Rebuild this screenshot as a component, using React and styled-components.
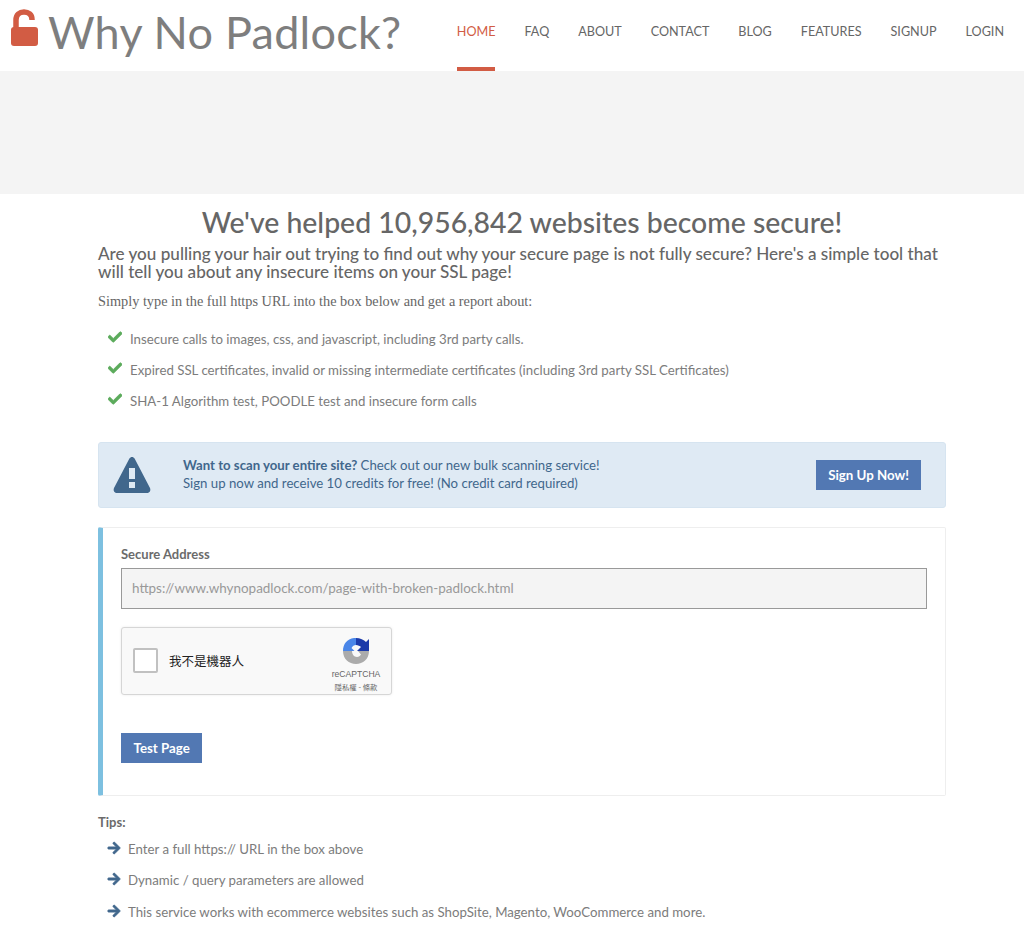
import React from 'react'
import styled, { createGlobalStyle } from 'styled-components'
import { FaCheck, FaArrowRight } from 'react-icons/fa'

const GlobalStyle = createGlobalStyle`
  html, body {
    margin: 0;
    padding: 0;
    background: #fff;
    font-family: 'Lato', sans-serif;
    color: #777;
  }
  * { box-sizing: border-box; }
`

const Header = styled.header`
  height: 71px;
  display: flex;
  justify-content: space-between;
  padding: 0 20px 0 10px;
`

const Brand = styled.div`
  display: flex;
  align-items: flex-start;
  gap: 8px;
  padding-top: 9px;
`

const BrandName = styled.span`
  font-size: 45px;
  line-height: 46px;
  color: #7e7e7e;
  letter-spacing: 0.25px;
`

const Nav = styled.nav`
  display: flex;
  gap: 29px;
`

const NavLink = styled.a`
  height: 71px;
  padding-top: 24px;
  font-size: 12.6px;
  line-height: 16px;
  color: ${(props) => (props.$active ? '#d25c44' : '#666')};
  border-bottom: 4px solid ${(props) => (props.$active ? '#d25c44' : 'transparent')};
`

const Band = styled.div`
  height: 123px;
  background: #f4f4f4;
`

const Main = styled.main`
  width: 848px;
  margin-left: 98px;
`

const Title = styled.h1`
  margin: 11px 0 0;
  font-size: 28.4px;
  line-height: 34px;
  font-weight: 500;
  color: #666;
  text-align: center;
`

const Lead = styled.h2`
  margin: 6px 0 0;
  font-size: 17.1px;
  line-height: 18px;
  font-weight: 500;
  color: #666;
`

const Intro = styled.p`
  margin: 10px 0 0;
  font-family: 'Liberation Serif', serif;
  font-size: 14.3px;
  line-height: 20px;
  color: #666;
`

const List = styled.ul`
  list-style: none;
  margin: ${(props) => props.$margin};
  padding: 0 0 0 ${(props) => props.$indent};
`

const Item = styled.li`
  display: flex;
  align-items: center;
  gap: ${(props) => props.$gap};
  height: ${(props) => props.$height};
  font-size: 13.25px;
  color: #7c7c7c;
`

const CheckIcon = styled(FaCheck)`
  color: #5cab5c;
  font-size: 14px;
  margin-top: -4px;
  stroke: currentColor;
  stroke-width: 30px;
`

const ArrowIcon = styled(FaArrowRight)`
  color: #41678c;
  font-size: 14px;
  margin-top: -2px;
  stroke: currentColor;
  stroke-width: 30px;
`

const Alert = styled.div`
  height: 66px;
  margin-top: 25px;
  display: flex;
  align-items: center;
  padding: 0 24px 0 14px;
  background: #dfeaf4;
  border: 1px solid #d6e4f0;
  border-radius: 3px;
  color: #41678c;
  font-size: 13.2px;
  line-height: 18px;
`

const AlertIconBox = styled.svg`
  flex: none;
  width: 38px;
  height: 36px;
`

const AlertText = styled.div`
  flex: 1;
  margin-left: 32px;
  padding-bottom: 2px;
  b { font-weight: 700; }
`

const Button = styled.button`
  height: 30px;
  margin-top: ${(props) => props.$offset || '0'};
  padding: 0 ${(props) => props.$pad};
  border: none;
  background: #5278b3;
  color: #fff;
  font-family: inherit;
  font-size: 13.3px;
  font-weight: 700;
`

const Card = styled.form`
  height: 269px;
  margin-top: 19px;
  padding: 18px 18px 0 18px;
  background: #fff;
  border: 1px solid #eee;
  border-left: 5px solid #7dc0e0;
  border-radius: 2px;
`

const Label = styled.label`
  display: block;
  font-size: 13px;
  line-height: 16px;
  font-weight: 700;
  color: #6b6b6b;
`

const Input = styled.input`
  display: block;
  width: 100%;
  height: 41px;
  margin-top: 6px;
  padding: 0 10px;
  background: #f4f4f4;
  border: 1px solid #999;
  font-family: inherit;
  font-size: 13.45px;
  &::placeholder { color: #999; opacity: 1; }
`

const Captcha = styled.div`
  position: relative;
  width: 271px;
  height: 68px;
  margin: 18px 0 38px;
  background: #f9f9f9;
  border: 1px solid #d6d6d6;
  border-radius: 3px;
  box-shadow: 0 0 3px rgba(0, 0, 0, 0.08);
  display: flex;
  align-items: center;
  padding-left: 11px;
`

const CaptchaBox = styled.span`
  width: 25px;
  height: 25px;
  background: #fff;
  border: 2px solid #c1c1c1;
  border-radius: 2px;
`

const CaptchaText = styled.span`
  margin-left: 11px;
  font-family: 'Noto Sans CJK TC', sans-serif;
  font-size: 12.5px;
  color: #222;
`

const CaptchaBrand = styled.div`
  position: absolute;
  right: 10px;
  top: 8px;
  width: 50px;
  display: flex;
  flex-direction: column;
  align-items: center;
  font-family: 'Liberation Sans', sans-serif;
  font-size: 8.6px;
  line-height: 10px;
  color: #666;
  svg { margin-bottom: 3px; }
`

const CaptchaLinks = styled.span`
  margin-top: 1px;
  font-family: 'Noto Sans CJK TC', sans-serif;
  font-size: 7.4px;
  line-height: 13px;
  white-space: nowrap;
`

const TipsLabel = styled.div`
  margin-top: 18px;
  font-size: 13px;
  line-height: 16px;
  font-weight: 700;
  color: #6b6b6b;
`

const PadlockIcon = () => (
  <svg width="30" height="38" viewBox="0 0 30 38">
    <rect x="1" y="18" width="27" height="19" rx="3" fill="#d25c44" />
    <path d="M6 19 V11 C6 5.5 9.5 3 14 3 C18.5 3 22 5.5 22 10.5 V11" fill="none" stroke="#d25c44" strokeWidth="5.5" />
  </svg>
)

const WarningIcon = () => (
  <AlertIconBox viewBox="0 0 38 36">
    <path
      fillRule="evenodd"
      d="M19 0 C20 0 21 .6 21.6 1.6 L37 31 C38 33.4 36.8 36 34 36 H4 C1.2 36 0 33.4 1 31 L16.4 1.6 C17 .6 18 0 19 0 Z M16 11 V22 H22 V11 Z M16 25 V31 H22 V25 Z"
      fill="#41678c"
    />
  </AlertIconBox>
)

const RecaptchaLogo = () => (
  <svg width="30" height="30" viewBox="0 0 30 30">
    <path d="M2 15 C2 8 6 3 13 2 L15 2 L15 9 C13 9 11.5 10 10.5 12 L13.5 15 Z" fill="#4a86e8" />
    <path d="M15 2 C19 2 23 4 25 6 L28 3 L28 15 L16 15 L20 11 C19 10 17 9 15 9 Z" fill="#1c3aa9" />
    <path d="M2 15 L11 15 C11 18 13 21 16 21 C18 21 19 20 20 18.5 L17 15 L28 15 C28 23 22 28 15 28 C8 28 2 23 2 15 Z" fill="#ababab" />
  </svg>
)

const App = () => (
  <>
    <GlobalStyle />
    <Header>
      <Brand>
        <PadlockIcon />
        <BrandName>Why No Padlock?</BrandName>
      </Brand>
      <Nav>
        <NavLink $active>HOME</NavLink>
        <NavLink>FAQ</NavLink>
        <NavLink>ABOUT</NavLink>
        <NavLink>CONTACT</NavLink>
        <NavLink>BLOG</NavLink>
        <NavLink>FEATURES</NavLink>
        <NavLink>SIGNUP</NavLink>
        <NavLink>LOGIN</NavLink>
      </Nav>
    </Header>
    <Band />
    <Main>
      <Title>We've helped 10,956,842 websites become secure!</Title>
      <Lead>
        Are you pulling your hair out trying to find out why your secure page is not fully secure? Here's a simple tool that will tell you about any insecure items on your SSL page!
      </Lead>
      <Intro>Simply type in the full https URL into the box below and get a report about:</Intro>
      <List $margin="12px 0 0" $indent="10px">
        <Item $gap="8px" $height="31.3px"><CheckIcon />Insecure calls to images, css, and javascript, including 3rd party calls.</Item>
        <Item $gap="8px" $height="31.3px"><CheckIcon />Expired SSL certificates, invalid or missing intermediate certificates (including 3rd party SSL Certificates)</Item>
        <Item $gap="8px" $height="31.3px"><CheckIcon />SHA-1 Algorithm test, POODLE test and insecure form calls</Item>
      </List>
      <Alert>
        <WarningIcon />
        <AlertText>
          <b>Want to scan your entire site?</b> Check out our new bulk scanning service!<br />
          Sign up now and receive 10 credits for free! (No credit card required)
        </AlertText>
        <Button type="button" $pad="12px" $offset="1px">Sign Up Now!</Button>
      </Alert>
      <Card>
        <Label>Secure Address</Label>
        <Input placeholder="https://www.whynopadlock.com/page-with-broken-padlock.html" />
        <Captcha>
          <CaptchaBox />
          <CaptchaText>我不是機器人</CaptchaText>
          <CaptchaBrand>
            <RecaptchaLogo />
            reCAPTCHA
            <CaptchaLinks>隱私權 - 條款</CaptchaLinks>
          </CaptchaBrand>
        </Captcha>
        <Button type="button" $pad="12.5px">Test Page</Button>
      </Card>
      <TipsLabel>Tips:</TipsLabel>
      <List $margin="3px 0 0" $indent="9px">
        <Item $gap="7px" $height="31.5px"><ArrowIcon />Enter a full https:// URL in the box above</Item>
        <Item $gap="7px" $height="31.5px"><ArrowIcon />Dynamic / query parameters are allowed</Item>
        <Item $gap="7px" $height="31.5px"><ArrowIcon />This service works with ecommerce websites such as ShopSite, Magento, WooCommerce and more.</Item>
      </List>
    </Main>
  </>
)

export default App
